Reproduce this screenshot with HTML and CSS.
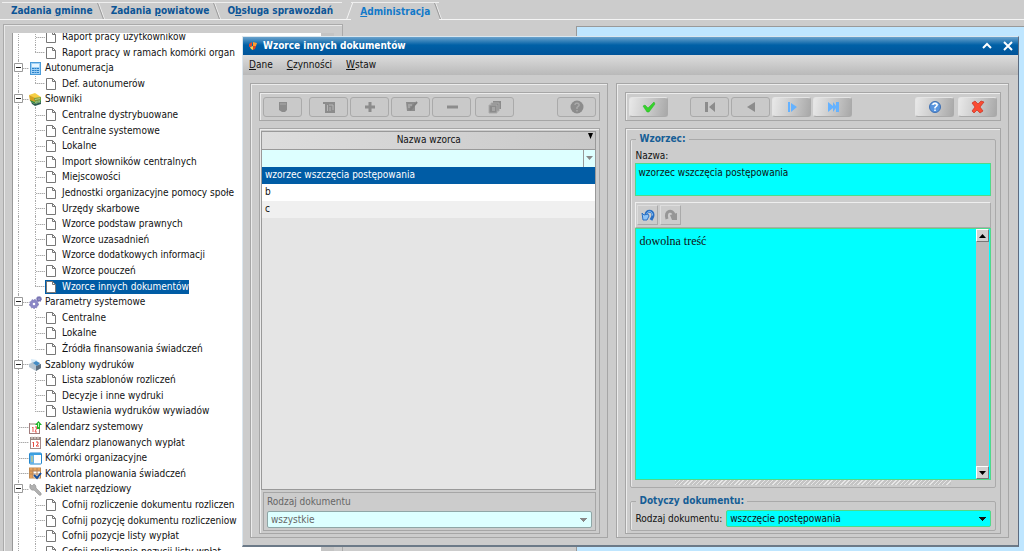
FILE: index.html
```html
<!DOCTYPE html>
<html lang="pl">
<head>
<meta charset="utf-8">
<title>Wzorce innych dokumentów</title>
<link rel="stylesheet" href="styles.css">
</head>
<body>
<svg class="defs" aria-hidden="true">
  <symbol id="page" viewBox="0 0 10 12"><path d="M.5.5h6l3 3v8h-9z" fill="#fff" stroke="#777"/><path d="M6.500.5v3h3" fill="none" stroke="#777"/></symbol>
  <symbol id="calc" viewBox="0 0 13 13"><rect x="1.500" y=".5" width="10" height="12" fill="#9fd0f5" stroke="#4b9bd8"/><path d="M3 2h7v3H3z" fill="#e6f5ff"/><path d="M3 6.500h7M3 8.500h7M3 10.500h7" stroke="#2a83cb" stroke-dasharray="2 .5"/></symbol>
  <symbol id="books" viewBox="0 0 13 13"><path d="M0 2l6-2 6 4-6 2z" fill="#f6cf45"/><path d="M0 2l6 3v4L1 8z" fill="#d5a01f"/><path d="M5 5l7-1v3L6 9z" fill="#7d9f3b"/><path d="M1 7l5 2 6-2v2l-6 2-4-2z" fill="#3b8b3c"/><path d="M2 9l4 2 6-2v2l-6 2-3-2z" fill="#2c5a50"/><path d="M6 6.500l5-1M6 9.500l5-1" stroke="#e6e3b0" stroke-width=".6"/></symbol>
  <symbol id="gears" viewBox="0 0 13 13"><circle cx="5" cy="8" r="2.800" fill="none" stroke="#8a87c6" stroke-width="3"/><circle cx="5" cy="8" r="4.500" fill="none" stroke="#7a77b4" stroke-dasharray="1.500 1.500"/><circle cx="10" cy="3" r="1.500" fill="none" stroke="#7773b2" stroke-width="2"/><circle cx="10" cy="3" r="2.700" fill="none" stroke="#8884c0" stroke-dasharray="1 1"/></symbol>
  <symbol id="printer" viewBox="0 0 13 13"><path d="M2 1l6 1 1 4-6 1z" fill="#d4e9f8"/><path d="M0 6l4-2 8 2v4l-5 3-7-4z" fill="#b5c4d0"/><path d="M7 8l5-2v4l-5 3z" fill="#5f6f7e"/><path d="M4 5l3-2 4 2-3 3z" fill="#448cc4"/></symbol>
  <symbol id="calup" viewBox="0 0 13 13"><rect x=".5" y="2.500" width="10" height="10" fill="#fff" stroke="#a07c7c"/><path d="M1 2h7v2H1z" fill="#c9c0b8"/><path d="M3 7l1-1v5M6 6h2l-2 5h2" fill="none" stroke="#e65a50"/><path d="M9.500 0L13 4h-2v4H8V4H6z" fill="#1fb52c"/><path d="M9.500 2v4" stroke="#baffb5"/></symbol>
  <symbol id="calendar" viewBox="0 0 13 13"><rect x="1.500" y="1.500" width="10" height="11" fill="#fff" stroke="#a58a8a"/><path d="M1 1h11v3H1z" fill="#968a85"/><path d="M3 0v3M6 0v3M9 0v3" stroke="#e8dfda"/><path d="M3.500 7l1-1v5M7 6h2v2L7 10h3" fill="none" stroke="#e6483f"/></symbol>
  <symbol id="panes" viewBox="0 0 13 13"><rect x=".5" y="1" width="12" height="11" rx="1" fill="#fff" stroke="#2387ce"/><path d="M1 1h11v2H1z" fill="#3ba0e0"/><path d="M1 3h4v9H1z" fill="#65b3e7"/><path d="M2 5h2M2 7h2M2 9h2" stroke="#e5d36a"/></symbol>
  <symbol id="control" viewBox="0 0 13 13"><rect x=".5" y="1" width="11" height="10" fill="#fff" stroke="#bf8951"/><path d="M1 1h10v3H1zM1 4h3v7H1z" fill="#e5a15a"/><path d="M4 1v10M8 1v10M1 4h10M1 7h10" stroke="#b5845a"/><path d="M5 8l3 3 4-5" fill="none" stroke="#174f9a" stroke-width="2"/></symbol>
  <symbol id="wrench" viewBox="0 0 13 13"><path d="M1 1l2 2 2-2c2 1 2 3 2 4l5 5c1 2-1 3-2 2L5 7C2 8 0 5 1 2z" fill="#b0b0b0" stroke="#858585" stroke-width=".5"/></symbol>
  <symbol id="minusbox" viewBox="0 0 9 9"><path d="M.5.5h8v8h-8z" fill="#fff" stroke="#999"/><path d="M2 4.500h5" stroke="#222"/></symbol>
  <symbol id="jar" viewBox="0 0 14 14"><path d="M3 2h8v8l-2 2H6l-3-2z"/><path d="M4 4h6" stroke="#aaa"/></symbol>
  <symbol id="sheets" viewBox="0 0 14 14"><path d="M1 2h12v11H3V4H1z"/><path d="M5.500 5v6M7 5h4v5M8 7v4" stroke="#b5b5b5" fill="none"/></symbol>
  <symbol id="plus" viewBox="0 0 14 14"><path d="M5.500 2h3v3.500H12v3H8.500V12h-3V8.500H2v-3h3.500z"/></symbol>
  <symbol id="edit" viewBox="0 0 14 14"><path d="M2 2h9v9H3z"/><path d="M6 10l7-8" stroke="#808080" stroke-width="2"/><path d="M4 5h4M4 7h2" stroke="#bbb"/></symbol>
  <symbol id="minus" viewBox="0 0 14 14"><path d="M2 5.500h11v3H2z"/></symbol>
  <symbol id="copies" viewBox="0 0 14 14"><path d="M5 1h8v8H5z"/><path d="M3 3h8v8H3z" stroke="#aaa"/><path d="M1 5h8v8H1z" stroke="#aaa"/><path d="M4 7h3v4H4z" fill="#a5a5a5"/></symbol>
  <symbol id="helpoff" viewBox="0 0 14 14"><circle cx="7" cy="7" r="6.500"/><path d="M5 5c0-3 5-2 4 .5L7 7.500V9m0 1v1.500" fill="none" stroke="#a9a9a9" stroke-width="1.500"/></symbol>
  <symbol id="check" viewBox="0 0 14 14"><path d="M1 6l2-1 3 3 6-6 1 2-6 8H5z" fill="#35d32b" stroke="#22b51e" stroke-width=".5"/></symbol>
  <symbol id="first" viewBox="0 0 14 14"><path d="M2 2h3v10H2zM12 2v10L6 7z"/></symbol>
  <symbol id="prev" viewBox="0 0 14 14"><path d="M11 2v10L3 7z"/></symbol>
  <symbol id="next" viewBox="0 0 14 14"><path d="M3 2h2v10H3zM6 3l6 4-6 5z" fill="#65b2ff"/></symbol>
  <symbol id="last" viewBox="0 0 14 14"><path d="M2 2l5 4V2l3 4V2h3v10h-3V8l-3 4V8l-5 4z" fill="#65b2ff"/></symbol>
  <symbol id="help" viewBox="0 0 14 14"><circle cx="7" cy="7" r="5.500" fill="#5794de" stroke="#3f70b2"/><path d="M3 5c2-3 6-3 8 0z" fill="#8dbdf2"/><path d="M5 5c0-3 5-2 4 .5L7 7.500V8.500m0 1V11" fill="none" stroke="#fff" stroke-width="1.500"/></symbol>
  <symbol id="cross" viewBox="0 0 14 14"><path d="M1 3l3-2 3 3 3-3 3 1-4 5 3 4-3 2-3-3-3 3-2-2 3-4z" fill="#fa4b32" stroke="#c73021" stroke-width=".7"/></symbol>
  <symbol id="undo" viewBox="0 0 14 14"><path d="M5 7c0-5 7-5 7 0 0 2-1 3-2 5" fill="none" stroke="#2a70c4" stroke-width="3"/><path d="M5.500 6.500c1-4 6-4 6 1" stroke="#8fc4f6" fill="none"/><path d="M1 5l2 2 4-1 1 2-2 4H2z" fill="#8fc4f6" stroke="#2a70c4"/></symbol>
  <symbol id="redo" viewBox="0 0 14 14"><path d="M3 11C0 2 9 1 10 7" fill="none" stroke="#969696" stroke-width="3"/><path d="M6 7l7-2v7H8z" fill="#969696"/></symbol>
</svg>

<nav class="tabs">
  <button>Zadania <u>g</u>minne</button>
  <button>Zadania <u>p</u>owiatowe</button>
  <button>O<u>b</u>sługa sprawozdań</button>
  <button class="active"><u>A</u>dministracja</button>
</nav>

<main class="desktop">
  <aside class="side">
    <ul class="tree">
      <li class="leaf"><i class="trunk"></i><i class="branch"></i><svg><use href="#page"/></svg><span>Raport pracy użytkowników</span></li>
      <li class="leaf"><i class="trunk"></i><i class="branch end"></i><svg><use href="#page"/></svg><span>Raport pracy w ramach komórki organ</span></li>
      <li class="node"><i class="trunk"></i><svg class="box"><use href="#minusbox"/></svg><svg><use href="#calc"/></svg><span>Autonumeracja</span></li>
      <li class="leaf"><i class="trunk"></i><i class="branch end"></i><svg><use href="#page"/></svg><span>Def. autonumerów</span></li>
      <li class="node"><i class="trunk"></i><svg class="box"><use href="#minusbox"/></svg><svg><use href="#books"/></svg><span>Słowniki</span></li>
      <li class="leaf"><i class="trunk"></i><i class="branch"></i><svg><use href="#page"/></svg><span>Centralne dystrybuowane</span></li>
      <li class="leaf"><i class="trunk"></i><i class="branch"></i><svg><use href="#page"/></svg><span>Centralne systemowe</span></li>
      <li class="leaf"><i class="trunk"></i><i class="branch"></i><svg><use href="#page"/></svg><span>Lokalne</span></li>
      <li class="leaf"><i class="trunk"></i><i class="branch"></i><svg><use href="#page"/></svg><span>Import słowników centralnych</span></li>
      <li class="leaf"><i class="trunk"></i><i class="branch"></i><svg><use href="#page"/></svg><span>Miejscowości</span></li>
      <li class="leaf"><i class="trunk"></i><i class="branch"></i><svg><use href="#page"/></svg><span>Jednostki organizacyjne pomocy społe</span></li>
      <li class="leaf"><i class="trunk"></i><i class="branch"></i><svg><use href="#page"/></svg><span>Urzędy skarbowe</span></li>
      <li class="leaf"><i class="trunk"></i><i class="branch"></i><svg><use href="#page"/></svg><span>Wzorce podstaw prawnych</span></li>
      <li class="leaf"><i class="trunk"></i><i class="branch"></i><svg><use href="#page"/></svg><span>Wzorce uzasadnień</span></li>
      <li class="leaf"><i class="trunk"></i><i class="branch"></i><svg><use href="#page"/></svg><span>Wzorce dodatkowych informacji</span></li>
      <li class="leaf"><i class="trunk"></i><i class="branch"></i><svg><use href="#page"/></svg><span>Wzorce pouczeń</span></li>
      <li class="leaf selected"><i class="trunk"></i><i class="branch end"></i><svg><use href="#page"/></svg><span>Wzorce innych dokumentów</span></li>
      <li class="node"><i class="trunk"></i><svg class="box"><use href="#minusbox"/></svg><svg><use href="#gears"/></svg><span>Parametry systemowe</span></li>
      <li class="leaf"><i class="trunk"></i><i class="branch"></i><svg><use href="#page"/></svg><span>Centralne</span></li>
      <li class="leaf"><i class="trunk"></i><i class="branch"></i><svg><use href="#page"/></svg><span>Lokalne</span></li>
      <li class="leaf"><i class="trunk"></i><i class="branch end"></i><svg><use href="#page"/></svg><span>Źródła finansowania świadczeń</span></li>
      <li class="node"><i class="trunk"></i><svg class="box"><use href="#minusbox"/></svg><svg><use href="#printer"/></svg><span>Szablony wydruków</span></li>
      <li class="leaf"><i class="trunk"></i><i class="branch"></i><svg><use href="#page"/></svg><span>Lista szablonów rozliczeń</span></li>
      <li class="leaf"><i class="trunk"></i><i class="branch"></i><svg><use href="#page"/></svg><span>Decyzje i inne wydruki</span></li>
      <li class="leaf"><i class="trunk"></i><i class="branch end"></i><svg><use href="#page"/></svg><span>Ustawienia wydruków wywiadów</span></li>
      <li class="node"><i class="trunk"></i><svg><use href="#calup"/></svg><span>Kalendarz systemowy</span></li>
      <li class="node"><i class="trunk"></i><svg><use href="#calendar"/></svg><span>Kalendarz planowanych wypłat</span></li>
      <li class="node"><i class="trunk"></i><svg><use href="#panes"/></svg><span>Komórki organizacyjne</span></li>
      <li class="node"><i class="trunk"></i><svg><use href="#control"/></svg><span>Kontrola planowania świadczeń</span></li>
      <li class="node"><i class="trunk"></i><svg class="box"><use href="#minusbox"/></svg><svg><use href="#wrench"/></svg><span>Pakiet narzędziowy</span></li>
      <li class="leaf"><i class="trunk"></i><i class="branch"></i><svg><use href="#page"/></svg><span>Cofnij rozliczenie dokumentu rozliczen</span></li>
      <li class="leaf"><i class="trunk"></i><i class="branch"></i><svg><use href="#page"/></svg><span>Cofnij pozycję dokumentu rozliczeniow</span></li>
      <li class="leaf"><i class="trunk"></i><i class="branch"></i><svg><use href="#page"/></svg><span>Cofnij pozycje listy wypłat</span></li>
      <li class="leaf"><i class="trunk"></i><i class="branch"></i><svg><use href="#page"/></svg><span>Cofnij rozliczenie pozycji listy wpłat</span></li>
    </ul>
  </aside>
  <div class="canvas"></div>
</main>

<section class="window">
  <header class="titlebar">
    <svg class="logo" viewBox="0 0 10 10"><path d="M1 3l3-2v4L1 6z" fill="#e8452a"/><path d="M5 1l4 1-1 3H5z" fill="#ff9b2e"/><path d="M2 6l3-1v4L3 8z" fill="#ffd34a"/><path d="M5 5h3L7 8 5 9z" fill="#e24720"/></svg>
    <h1>Wzorce innych dokumentów</h1>
    <button aria-label="Zwiń"><svg viewBox="0 0 10 10"><path d="M1 7l4-4 4 4" fill="none" stroke="#fff" stroke-width="2"/></svg></button>
    <button aria-label="Zamknij"><svg viewBox="0 0 10 10"><path d="M1 1l8 8M9 1L1 9" stroke="#fff" stroke-width="2"/></svg></button>
  </header>
  <nav class="menu">
    <button><u>D</u>ane</button>
    <button><u>C</u>zynności</button>
    <button><u>W</u>staw</button>
  </nav>
  <div class="content">
    <div class="pane">
      <div class="toolbar">
        <button disabled aria-label="Wybierz"><svg><use href="#jar"/></svg></button>
        <span class="gap"></span>
        <button disabled aria-label="Szablon"><svg><use href="#sheets"/></svg></button>
        <button disabled aria-label="Dodaj"><svg><use href="#plus"/></svg></button>
        <button disabled aria-label="Edytuj"><svg><use href="#edit"/></svg></button>
        <button disabled aria-label="Usuń"><svg><use href="#minus"/></svg></button>
        <button disabled class="apart" aria-label="Kopiuj"><svg><use href="#copies"/></svg></button>
        <button disabled class="push" aria-label="Pomoc"><svg><use href="#helpoff"/></svg></button>
      </div>
      <div class="frame list">
        <div class="grid">
          <table>
            <thead>
              <tr><th>Nazwa wzorca<svg class="sort" viewBox="0 0 5 6"><path d="M0 0h5L2.500 6z"/></svg></th></tr>
              <tr><td class="filter"><div><input type="text" aria-label="Filtr nazwy"><button aria-label="Rozwiń"><svg viewBox="0 0 7 4"><path d="M0 0h7L3.500 4z"/></svg></button></div></td></tr>
            </thead>
            <tbody>
              <tr class="current"><td>wzorzec wszczęcia postępowania</td></tr>
              <tr><td>b</td></tr>
              <tr><td>c</td></tr>
            </tbody>
          </table>
        </div>
        <div class="kind">
          <label for="kind">Rodzaj dokumentu</label>
          <select id="kind" disabled><option>wszystkie</option></select>
        </div>
      </div>
    </div>

    <div class="pane">
      <div class="toolbar">
        <button aria-label="Zatwierdź"><svg><use href="#check"/></svg></button>
        <span class="gap wide"></span>
        <button disabled aria-label="Pierwszy"><svg><use href="#first"/></svg></button>
        <button disabled aria-label="Poprzedni"><svg><use href="#prev"/></svg></button>
        <button aria-label="Następny"><svg><use href="#next"/></svg></button>
        <button aria-label="Ostatni"><svg><use href="#last"/></svg></button>
        <button class="push" aria-label="Pomoc"><svg><use href="#help"/></svg></button>
        <button class="apart" aria-label="Anuluj"><svg><use href="#cross"/></svg></button>
      </div>
      <div class="frame form">
        <fieldset class="pattern">
          <legend>Wzorzec:</legend>
          <div class="fields">
            <label for="name">Nazwa:</label>
            <textarea id="name" class="name">wzorzec wszczęcia postępowania</textarea>
            <div class="editbar">
              <button aria-label="Cofnij"><svg><use href="#undo"/></svg></button>
              <button disabled aria-label="Ponów"><svg><use href="#redo"/></svg></button>
            </div>
            <div class="editor">
              <textarea aria-label="Treść">dowolna treść</textarea>
              <div class="scroll">
                <button aria-label="W górę"><svg viewBox="0 0 7 4"><path d="M0 4h7L3.500 0z"/></svg></button>
                <button aria-label="W dół"><svg viewBox="0 0 7 4"><path d="M0 0h7L3.500 4z"/></svg></button>
              </div>
            </div>
            <div class="grip"></div>
          </div>
        </fieldset>
        <fieldset>
          <legend>Dotyczy dokumentu:</legend>
          <div class="doc">
            <label for="doc">Rodzaj dokumentu:</label>
            <select id="doc"><option>wszczęcie postępowania</option></select>
          </div>
        </fieldset>
      </div>
    </div>
  </div>
</section>
</body>
</html>
```
FILE: styles.css
```css
* { box-sizing: border-box; }

body {
  margin: 0;
  height: 100vh;
  display: flex;
  flex-direction: column;
  overflow: hidden;
  position: relative;
  background: #ccc;
  color: #111;
  font: 10px/14px "DejaVu Sans Condensed", "DejaVu Sans", sans-serif;
}

button, input, select, textarea { font: inherit; color: inherit; margin: 0; }
button { padding: 0; border: 0; background: none; }
svg { display: block; }
.defs { position: absolute; width: 0; height: 0; }

/* Tabs */
.tabs {
  display: flex;
  height: 20px;
  padding: 2px 0 0 2px;
  border-bottom: 1px solid #f4f4f4;
}
.tabs button {
  position: relative;
  height: 17px;
  padding: 0 9px;
  border-top: 1px solid #eee;
  color: #0d5596;
  font-weight: bold;
}
.tabs button::after {
  content: "";
  position: absolute;
  right: 0;
  top: 0;
  height: 16px;
  border-left: 1px solid #999;
  border-right: 1px solid #eee;
  transform: skewX(20deg);
}
.tabs button:nth-child(3)::after { content: none; }
.tabs .active {
  height: 18px;
  margin-left: 9px;
  background: #ccc;
  color: #1279c9;
}
.tabs .active::before {
  content: "";
  position: absolute;
  left: -2px;
  top: 0;
  height: 17px;
  border-left: 1px solid #f4f4f4;
  transform: skewX(-20deg);
}

/* Tree */
.desktop { flex: 1; min-height: 0; display: flex; }
.side {
  width: 340px;
  margin: 4px 0 0 3px;
  padding: 8px 8px 0;
  border: 1px solid #aaa;
  border-bottom: 0;
  box-shadow: inset 1px 1px #e8e8e8;
  overflow: hidden;
}
.tree {
  height: 100%;
  margin: 0;
  padding: 0;
  list-style: none;
  overflow: hidden;
  background: #fff;
  border: 1px solid #999;
  border-width: 0 13px 0 1px;
  border-right-color: #c4c4c4;
}
.tree li {
  position: relative;
  display: flex;
  align-items: center;
  height: 16px;
  padding-left: 5px;
  white-space: nowrap;
}
.tree li:first-child { margin-top: -4px; }
.tree li:nth-child(5n+2), .tree li:nth-child(5n+4) { height: 15px; }
.tree svg { flex: none; width: 13px; height: 13px; }
.tree .leaf svg { width: 10px; height: 12px; margin: 0 6px 0 1px; }
.tree .node svg { margin-right: 3px; }
.tree .node .box { position: absolute; left: 1px; top: 3px; width: 9px; height: 9px; }
.trunk, .branch {
  align-self: stretch;
  flex: none;
  width: 17px;
  border-left: 1px dotted #aaa;
}
.branch, .node .trunk {
  width: 10px;
  background: repeating-linear-gradient(90deg, #aaa 0 1px, #ddd 1px 2px) 0 50% / 100% 1px no-repeat;
}
.node .trunk { width: 11px; }
.branch.end {
  border: 0;
  background:
    repeating-linear-gradient(90deg, #aaa 0 1px, #ddd 1px 2px) 0 50% / 100% 1px no-repeat,
    repeating-linear-gradient(#aaa 0 1px, #fff 1px 2px) 0 0 / 1px 50% no-repeat;
}
.selected svg { background: #005ca5; box-shadow: 0 0 0 1px #005ca5; }
.selected span { margin-left: -5px; padding-left: 5px; background: #005ca5; color: #fff; }

.canvas {
  flex: 1;
  margin: 6px 0 0 233px;
  background: #bfe6ff;
  border: 1px solid #999;
  border-width: 1px 0 0 1px;
}

/* Window */
.window {
  position: absolute;
  inset: 36px 5px 4px 242px;
  display: flex;
  flex-direction: column;
  background: #ccc;
  border: 1px solid #dbe6ee;
  border-right: 1px solid #5b6b80;
  border-bottom: 2px solid #6c7a88;
}
.titlebar {
  display: flex;
  align-items: center;
  height: 18px;
  padding: 0 5px;
  color: #fff;
  background: linear-gradient(#6ba3cd, #0060a6 45%, #00549a);
}
.titlebar h1 { flex: 1; margin: 0 0 0 5px; font-size: 10px; }
.titlebar .logo { width: 10px; height: 10px; }
.titlebar button { margin-left: 11px; }
.titlebar button svg { width: 10px; height: 10px; }
.menu {
  display: flex;
  gap: 14px;
  height: 20px;
  padding: 0 6px;
  background: linear-gradient(#dcdcdc, #b9b9b9);
}
.content {
  flex: 1;
  min-height: 0;
  display: grid;
  grid-template-columns: 358fr 392fr;
  gap: 8px;
  padding: 8px 9px 7px 7px;
}
.pane, .frame, .toolbar {
  border: 1px solid #a6a6a6;
  box-shadow: inset 1px 1px #ececec;
}
.pane {
  min-width: 0;
  min-height: 0;
  display: flex;
  flex-direction: column;
  gap: 7px;
  padding: 8px 7px 3px 8px;
}
.toolbar { display: flex; align-items: center; gap: 2px; height: 29px; padding: 0 3px; }
.toolbar button {
  width: 39px;
  height: 20px;
  border: 1px solid #aaa;
  border-top-color: #e4e4e4;
  border-left-color: #e4e4e4;
  border-radius: 3px;
  background: linear-gradient(100deg, #e8e8e8, #c4c4c4 60%, #a8a8a8);
}
.toolbar button:disabled { border-color: #aaa; background: #c9c9c9; }
.toolbar svg { width: 14px; height: 14px; margin: auto; fill: #8c8c8c; }
.gap { width: 3px; }
.gap.wide { width: 18px; }
.toolbar .push { margin-left: auto; }
.toolbar .apart { margin-left: 2px; }

.frame { flex: 1; min-height: 0; display: flex; flex-direction: column; }
.list { padding: 2px 3px 2px 1px; gap: 2px; }
.grid { flex: 1; background: #e5e5e5; border: 1px solid #999; }
table { width: 100%; border-collapse: collapse; }
td { height: 17px; padding: 0 3px; }
th {
  position: relative;
  height: 17px;
  padding: 0;
  font-weight: normal;
  background: linear-gradient(100deg, #ddd, #c9c9c9);
  border-bottom: 1px solid #999;
}
.sort { position: absolute; right: 2px; top: 1px; width: 5px; height: 6px; }
.filter { height: 17px; padding: 0; }
.filter div { display: flex; height: 17px; background: #dff; }
.filter input { flex: 1; min-width: 0; padding: 0 3px; border: 0; background: none; }
.filter button { width: 12px; border-left: 1px solid #999; }
.filter svg { width: 7px; height: 4px; margin: auto; fill: #888; }
tbody tr { background: #fff; }
tbody tr:nth-child(3) { background: #f0f0f0; }
tbody .current { background: #005ca5; color: #fff; }
.kind {
  margin-left: 2px;
  padding: 2px 3px;
  border: 1px solid #a6a6a6;
  color: #666;
}
.kind label { display: block; margin-bottom: 2px; }
select {
  appearance: none;
  display: block;
  width: 100%;
  height: 17px;
  padding: 0 3px;
  border: 1px solid #8fa6a6;
  border-radius: 2px;
  opacity: 1;
  background-color: #dff;
  background-image: conic-gradient(from -45deg at 50% 100%, #888 90deg, transparent 0);
  background-position: right 4px center;
  background-repeat: no-repeat;
  background-size: 7px 4px;
}

.form { padding: 3px 4px 2px; gap: 6px; }
fieldset {
  min-width: 0;
  margin: 0;
  padding: 2px 4px;
  border: 1px solid #aaa;
  border-radius: 2px;
  box-shadow: inset 1px 0 #e8e8e8;
}
legend { margin-left: 1px; padding: 0 3px; color: #165e96; font-weight: bold; }
.pattern { flex: 1; min-height: 0; padding-top: 3px; }
.fields { display: flex; flex-direction: column; height: 100%; }
.fields textarea, .editor { border: 1px solid #4fd98a; background: #0ff; }
textarea { display: block; resize: none; border-radius: 0; overflow: hidden; }
.name { height: 33px; padding: 2px; }
.editbar {
  display: flex;
  gap: 2px;
  height: 26px;
  margin-top: 6px;
  padding: 2px 1px;
  border: 1px solid #aaa;
  border-top-color: #eee;
  border-left-color: #eee;
}
.editbar button { width: 21px; border: 1px solid #aaa; border-top-color: #ddd; border-left-color: #ddd; }
.editbar svg { width: 14px; height: 14px; margin: auto; }
.editor { flex: 1; display: flex; min-height: 0; padding-right: 1px; }
.editor textarea {
  flex: 1;
  min-width: 0;
  padding: 5px 3px;
  border: 0;
  font: 12px/14px "Liberation Serif", serif;
}
.scroll { display: flex; flex-direction: column; justify-content: space-between; width: 13px; background: #bbb; }
.scroll button { height: 13px; border: 1px solid #777; border-top-color: #fff; border-left-color: #fff; background: #d0d0d0; }
.scroll svg { width: 7px; height: 4px; margin: auto; }
.grip {
  height: 5px;
  margin: 0 40px;
  background: repeating-linear-gradient(135deg, #e6e6e6 0 1px, #c4c4c4 1px 3px);
}
.doc { display: flex; align-items: center; gap: 4px; padding-bottom: 1px; }
.doc select {
  flex: 1;
  min-width: 0;
  border-color: #4fd98a;
  background-color: #0ff;
  background-image: conic-gradient(from -45deg at 50% 100%, #111 90deg, transparent 0);
}
```
